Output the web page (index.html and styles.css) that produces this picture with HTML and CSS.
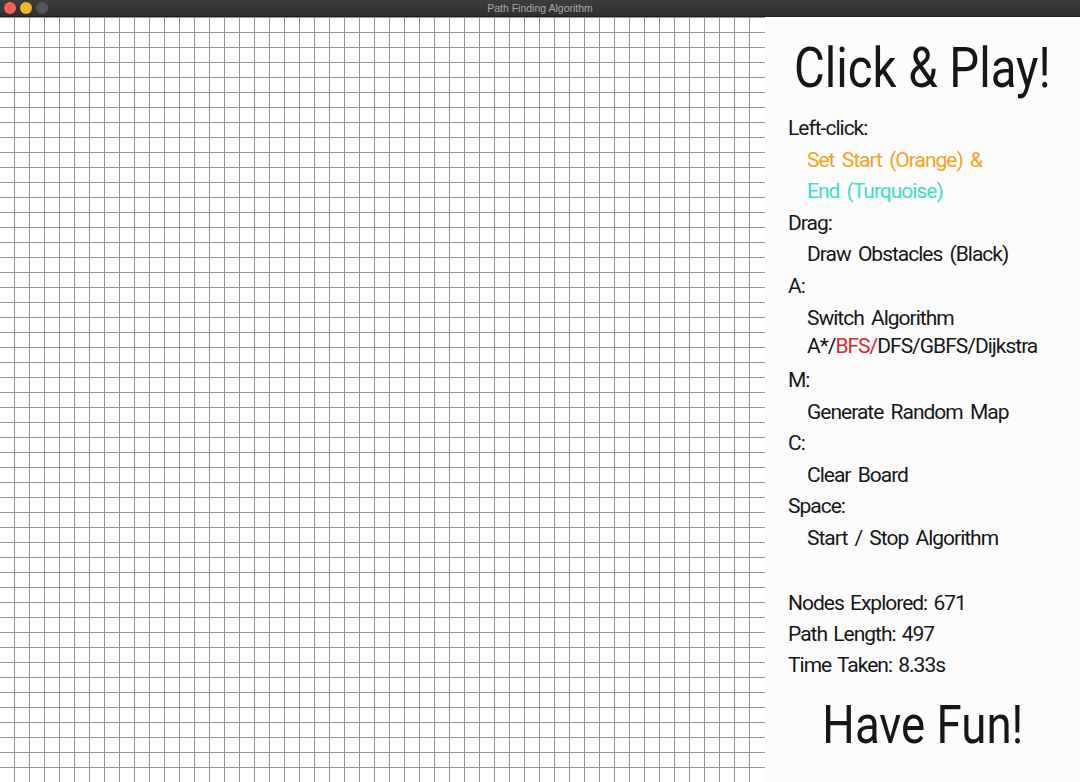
FILE: index.html
```html
<!DOCTYPE html>
<html>
<head>
<meta charset="utf-8">
<title>Path Finding Algorithm</title>
<link rel="stylesheet" href="styles.css">
</head>
<body>
<div class="window">
  <div class="titlebar">
    <div class="lights">
      <span class="light red"></span>
      <span class="light yellow"></span>
      <span class="light grey"></span>
    </div>
    <div class="wtitle">Path Finding Algorithm</div>
  </div>
  <div class="content">
    <div class="grid"></div>
    <div class="panel">
      <div class="headline"><span class="squeeze">Click &amp; Play!</span></div>
      <div class="list">
        <div class="row">Left-click:</div>
        <div class="row sub orange">Set Start (Orange) &amp;</div>
        <div class="row sub turq">End (Turquoise)</div>
        <div class="row">Drag:</div>
        <div class="row sub">Draw Obstacles (Black)</div>
        <div class="row">A:</div>
        <div class="multi sub">
          <div>Switch Algorithm</div>
          <div>A*/<span class="red-text">BFS/</span>DFS/GBFS/Dijkstra</div>
        </div>
        <div class="row">M:</div>
        <div class="row sub">Generate Random Map</div>
        <div class="row">C:</div>
        <div class="row sub">Clear Board</div>
        <div class="row">Space:</div>
        <div class="row sub">Start / Stop Algorithm</div>
      </div>
      <div class="stats">
        <div class="stat">Nodes Explored: 671</div>
        <div class="stat">Path Length: 497</div>
        <div class="stat">Time Taken: 8.33s</div>
      </div>
      <div class="footer"><span class="squeeze">Have Fun!</span></div>
    </div>
  </div>
</div>
</body>
</html>
```

FILE: styles.css
```css
html, body {
  margin: 0;
  padding: 0;
  background: #fcfcfc;
}
.window {
  width: 1080px;
  height: 782px;
  display: flex;
  flex-direction: column;
  overflow: hidden;
}
.titlebar {
  height: 17px;
  flex: 0 0 17px;
  background: linear-gradient(#3d3d3d, #2f2f2f);
  border-bottom: 1px solid #1f1f1f;
  box-sizing: border-box;
  position: relative;
  display: flex;
  align-items: center;
  justify-content: center;
}
.lights {
  position: absolute;
  left: 4px;
  top: 2px;
  display: flex;
  gap: 4px;
}
.light {
  width: 12px;
  height: 12px;
  border-radius: 50%;
  display: block;
}
.red { background: #fc5b57; }
.yellow { background: #f4b52b; }
.grey { background: #555555; }
.wtitle {
  font-family: "Liberation Sans", Arial, sans-serif;
  font-size: 10.5px;
  color: #a8a8a8;
}
.content {
  flex: 1;
  display: flex;
}
.grid {
  width: 765px;
  flex: 0 0 765px;
  height: 765px;
  background-color: #ffffff;
  background-image:
    repeating-linear-gradient(to right, transparent 0 14px, #939393 14px 15px),
    repeating-linear-gradient(to bottom, #939393 0 1px, transparent 1px 15px);
  background-size: 750px 100%, 100% 100%;
  background-repeat: no-repeat, no-repeat;
}
.panel {
  flex: 1;
  background: #fcfcfc;
  display: flex;
  flex-direction: column;
  font-family: Roboto, "DejaVu Sans", sans-serif;
  color: #161616;
  padding: 25px 0 0 23px;
}
.headline {
  margin: 0 0 0 -23px;
  font-size: 55px;
  line-height: 53px;
  text-align: center;
}
.squeeze {
  display: inline-block;
  transform: scaleX(0.86);
}
.list {
  margin-top: 18px;
  font-size: 21px;
  letter-spacing: -1px;
  word-spacing: 3px;
}
.row {
  height: 31.5px;
  line-height: 31.5px;
  white-space: nowrap;
}
.sub {
  padding-left: 19px;
}
.orange { color: #f5a41f; }
.turq { color: #3fdbcd; }
.red-text { color: #e4262a; }
.multi {
  line-height: 28px;
  padding-top: 2px;
  height: 63px;
  box-sizing: border-box;
  white-space: nowrap;
}
.stats {
  margin-top: 34px;
  font-size: 21px;
  letter-spacing: -1px;
  word-spacing: 2px;
}
.stat {
  height: 31px;
  line-height: 31px;
  white-space: nowrap;
}
.footer {
  margin: auto 0 0 -23px;
  padding-bottom: 31px;
  font-size: 53px;
  line-height: 52px;
  text-align: center;
}
```
